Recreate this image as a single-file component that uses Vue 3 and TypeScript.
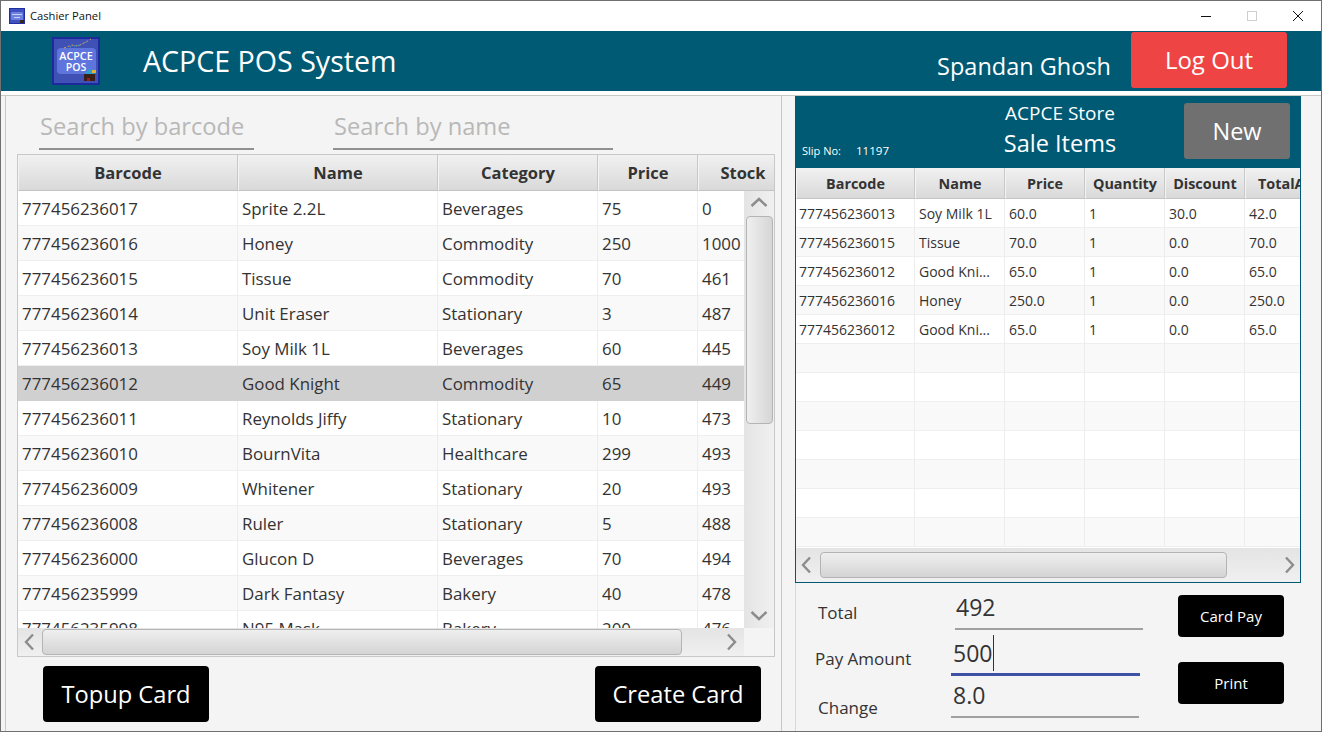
<script setup lang="ts">
const productHeads = ['Barcode', 'Name', 'Category', 'Price', 'Stock']
const products = [
  ['777456236017', 'Sprite 2.2L', 'Beverages', '75', '0'],
  ['777456236016', 'Honey', 'Commodity', '250', '1000'],
  ['777456236015', 'Tissue', 'Commodity', '70', '461'],
  ['777456236014', 'Unit Eraser', 'Stationary', '3', '487'],
  ['777456236013', 'Soy Milk 1L', 'Beverages', '60', '445'],
  ['777456236012', 'Good Knight', 'Commodity', '65', '449'],
  ['777456236011', 'Reynolds Jiffy', 'Stationary', '10', '473'],
  ['777456236010', 'BournVita', 'Healthcare', '299', '493'],
  ['777456236009', 'Whitener', 'Stationary', '20', '493'],
  ['777456236008', 'Ruler', 'Stationary', '5', '488'],
  ['777456236000', 'Glucon D', 'Beverages', '70', '494'],
  ['777456235999', 'Dark Fantasy', 'Bakery', '40', '478'],
  ['777456235998', 'N95 Mask', 'Bakery', '200', '476'],
]
const selectedRow = 5

const saleHeads = ['Barcode', 'Name', 'Price', 'Quantity', 'Discount', 'TotalAmount']
const saleRows = [
  ['777456236013', 'Soy Milk 1L', '60.0', '1', '30.0', '42.0'],
  ['777456236015', 'Tissue', '70.0', '1', '0.0', '70.0'],
  ['777456236012', 'Good Kni...', '65.0', '1', '0.0', '65.0'],
  ['777456236016', 'Honey', '250.0', '1', '0.0', '250.0'],
  ['777456236012', 'Good Kni...', '65.0', '1', '0.0', '65.0'],
  ['', '', '', '', '', ''],
  ['', '', '', '', '', ''],
  ['', '', '', '', '', ''],
  ['', '', '', '', '', ''],
  ['', '', '', '', '', ''],
  ['', '', '', '', '', ''],
  ['', '', '', '', '', ''],
]
</script>

<template>
  <div class="window">
    <div class="titlebar">
      <svg class="title-icon" viewBox="0 0 16 16">
        <rect width="16" height="16" fill="#1f2f9f" />
        <rect x="1" y="1" width="14" height="14" fill="#3f51c0" />
        <rect x="2" y="4" width="12" height="8" rx="1" fill="#6d82e0" />
        <rect x="3" y="6" width="10" height="1" fill="#c9d1f6" />
        <rect x="5" y="9" width="6" height="1" fill="#c9d1f6" />
        <rect x="11" y="12" width="4" height="3" fill="#3a2418" />
      </svg>
      <span class="title-text">Cashier Panel</span>
      <div class="win-controls">
        <svg class="win-btn" viewBox="0 0 46 30"><path d="M18 15.5h10" stroke="#111" fill="none" /></svg>
        <svg class="win-btn" viewBox="0 0 46 30"><rect x="18.5" y="10.5" width="9" height="9" stroke="#cfcfcf" fill="none" /></svg>
        <svg class="win-btn" viewBox="0 0 46 30"><path d="M18 10l10 10M28 10L18 20" stroke="#111" fill="none" /></svg>
      </div>
    </div>

    <header class="app-header">
      <svg class="logo" viewBox="0 0 48 48">
        <rect width="48" height="48" fill="#1c2b9c" />
        <rect x="2" y="2" width="44" height="44" fill="#3f51b5" />
        <rect x="5" y="11" width="39" height="26" rx="4" fill="#5f75de" />
        <path d="M12 11l8-3 6 1 8-4 5-3" stroke="#d9a05b" stroke-dasharray="2 2" fill="none" />
        <path d="M18 10l10-2 6-3" stroke="#3fc0c8" stroke-dasharray="1 3" fill="none" />
        <text x="24" y="22.5" class="logo-text" text-anchor="middle">ACPCE</text>
        <text x="24" y="34" class="logo-text small" text-anchor="middle">POS</text>
        <rect x="32" y="37" width="11" height="7" fill="#3a2018" />
        <rect x="35" y="41" width="3" height="3" fill="#a01c1c" />
        <path d="M33 37l3-5 5 1 3 2-1 2z" fill="#2f9fd0" />
        <rect x="40" y="33" width="4" height="3" fill="#e6b432" />
      </svg>
      <h1 class="app-title">ACPCE POS System</h1>
      <span class="user-name">Spandan Ghosh</span>
      <button class="logout">Log Out</button>
    </header>

    <div class="strip"></div>

    <main class="workspace">
      <section class="left-pane">
        <div class="search-row">
          <div class="search barcode">Search by barcode</div>
          <div class="search name">Search by name</div>
        </div>

        <div class="product-table">
          <div class="product-grid product-head">
            <div v-for="h in productHeads" :key="h" class="head-cell">{{ h }}</div>
          </div>
          <div class="product-middle">
            <div class="product-rows">
              <div
                v-for="(row, i) in products"
                :key="row[0]"
                class="product-grid product-row"
                :class="{ alt: i % 2 === 1, selected: i === selectedRow }"
              >
                <div v-for="(c, j) in row" :key="j" class="cell">{{ c }}</div>
              </div>
            </div>
            <div class="vbar">
              <div class="vbar-arrow up">
                <svg width="18" height="10" viewBox="0 0 18 10"><path d="M1.5 9L9 2l7.5 7" /></svg>
              </div>
              <div class="vbar-thumb"></div>
              <div class="bar-space"></div>
              <div class="vbar-arrow">
                <svg width="18" height="10" viewBox="0 0 18 10"><path d="M1.5 1L9 8l7.5-7" /></svg>
              </div>
            </div>
          </div>
          <div class="product-foot">
            <div class="hbar">
              <div class="hbar-arrow prev">
                <svg width="10" height="18" viewBox="0 0 10 18"><path d="M9 1.5L2 9l7 7.5" /></svg>
              </div>
              <div class="hbar-thumb product-thumb"></div>
              <div class="bar-space"></div>
              <div class="hbar-arrow">
                <svg width="10" height="18" viewBox="0 0 10 18"><path d="M1 1.5L8 9l-7 7.5" /></svg>
              </div>
            </div>
            <div class="corner"></div>
          </div>
        </div>

        <div class="card-actions">
          <button class="black-btn big">Topup Card</button>
          <button class="black-btn big">Create Card</button>
        </div>
      </section>

      <section class="right-pane">
        <div class="sale-box">
          <div class="sale-header">
            <div class="slip">
              <span class="slip-label">Slip No:</span>
              <span class="slip-no">11197</span>
            </div>
            <div class="sale-title">
              <div class="store">ACPCE Store</div>
              <div class="sale-items">Sale Items</div>
            </div>
            <button class="new-btn">New</button>
          </div>
          <div class="sale-grid sale-head">
            <div v-for="h in saleHeads" :key="h" class="head-cell">{{ h }}</div>
          </div>
          <div class="sale-rows">
            <div
              v-for="(row, i) in saleRows"
              :key="i"
              class="sale-grid sale-row"
              :class="{ alt: i % 2 === 1 }"
            >
              <div v-for="(c, j) in row" :key="j" class="cell">{{ c }}</div>
            </div>
          </div>
          <div class="hbar sale-hbar">
            <div class="hbar-arrow sale-prev">
              <svg width="10" height="18" viewBox="0 0 10 18"><path d="M9 1.5L2 9l7 7.5" /></svg>
            </div>
            <div class="hbar-thumb sale-thumb"></div>
            <div class="bar-space"></div>
            <div class="hbar-arrow sale-next">
              <svg width="10" height="18" viewBox="0 0 10 18"><path d="M1 1.5L8 9l-7 7.5" /></svg>
            </div>
          </div>
        </div>

        <div class="pay-area">
          <div class="pay-form">
            <div class="pay-row total">
              <span class="pay-label">Total</span>
              <div class="pay-field">492</div>
            </div>
            <div class="pay-row amount">
              <span class="pay-label">Pay Amount</span>
              <div class="pay-field focused">500<i class="caret"></i></div>
            </div>
            <div class="pay-row change">
              <span class="pay-label">Change</span>
              <div class="pay-field">8.0</div>
            </div>
          </div>
          <div class="pay-actions">
            <button class="black-btn small">Card Pay</button>
            <button class="black-btn small">Print</button>
          </div>
        </div>
      </section>
    </main>
  </div>
</template>

<style>
html,
body {
  margin: 0;
  background: #f4f4f4;
  overflow: hidden;
}
</style>

<style scoped>
.window {
  width: 1322px;
  height: 732px;
  box-sizing: border-box;
  border: 1px solid #6f6f6f;
  display: flex;
  flex-direction: column;
  font-family: "Open Sans", "Noto Sans", sans-serif;
  color: #333;
  background: #f4f4f4;
  overflow: hidden;
}

/* title bar */
.titlebar {
  height: 30px;
  flex: none;
  background: #fff;
  display: flex;
  align-items: center;
  padding-left: 8px;
  color: #111;
}
.title-icon {
  width: 16px;
  height: 16px;
  margin-right: 5px;
}
.title-text {
  font-size: 11.2px;
  padding-bottom: 2px;
}
.win-controls {
  margin-left: auto;
  display: flex;
}
.win-btn {
  width: 46px;
  height: 30px;
}

/* header */
.app-header {
  height: 60px;
  flex: none;
  background: #005a73;
  display: flex;
  align-items: center;
  color: #fff;
  padding-left: 51px;
}
.logo {
  width: 48px;
  height: 48px;
  flex: none;
}
.logo-text {
  font-size: 10.8px;
  font-weight: 600;
  fill: #fff;
  font-family: "Open Sans", sans-serif;
}
.logo-text.small {
  font-size: 10.5px;
}
.app-title {
  margin: 0 0 2px 43px;
  font-size: 28.6px;
  font-weight: 400;
}
.user-name {
  margin-left: auto;
  font-size: 23.5px;
  padding-top: 10px;
}
.logout {
  width: 156px;
  height: 56px;
  margin: 0 34px 3px 20px;
  border: 0;
  border-radius: 3px;
  background: #ef4444;
  color: #fff;
  font: inherit;
  font-size: 24px;
  padding: 0;
}
.strip {
  height: 4px;
  flex: none;
  background: #fff;
  border-bottom: 1px solid #c8c8c8;
}

/* panes */
.workspace {
  flex: 1;
  display: flex;
  min-height: 0;
  padding-left: 4px;
}
.left-pane {
  width: 777px;
  flex: none;
  box-sizing: border-box;
  border-left: 1px solid #c8c8c8;
  border-right: 1px solid #c8c8c8;
  padding-left: 11px;
}
.search-row {
  height: 58px;
  box-sizing: border-box;
  display: flex;
  align-items: flex-end;
  padding: 0 0 4px 22px;
}
.search {
  box-sizing: border-box;
  border-bottom: 2px solid #909090;
  font-size: 23.7px;
  line-height: 32px;
  color: #b8b8b8;
  padding: 0 0 6px 1px;
}
.search.barcode {
  width: 215px;
  margin-right: 79px;
}
.search.name {
  width: 280px;
}

/* left table */
.product-table {
  width: 758px;
  height: 503px;
  box-sizing: border-box;
  border: 1px solid #c8c8c8;
  display: flex;
  flex-direction: column;
  background: #fff;
  overflow: hidden;
}
.product-grid {
  display: grid;
  grid-template-columns: 220px 200px 160px 100px 90px;
}
.product-head {
  height: 36px;
  flex: none;
  width: 770px;
}
.head-cell {
  box-sizing: border-box;
  display: flex;
  align-items: center;
  justify-content: center;
  background: linear-gradient(#f1f1f1, #d9d9d9);
  border-right: 1px solid #c8c8c8;
  border-bottom: 1px solid #c4c4c4;
  border-left: 1px solid #f4f4f4;
  font-weight: 700;
  white-space: nowrap;
  color: #333;
  overflow: hidden;
}
.product-head .head-cell {
  font-size: 16.5px;
}
.product-middle {
  height: 437px;
  flex: none;
  display: flex;
}
.product-rows {
  width: 726px;
  flex: none;
  overflow: hidden;
}
.product-row {
  height: 35px;
  width: 770px;
  font-size: 16.9px;
}
.cell {
  box-sizing: border-box;
  border-right: 1px solid #ededed;
  border-bottom: 1px solid #efefef;
  padding-left: 4px;
  white-space: nowrap;
  overflow: hidden;
  display: flex;
  align-items: center;
  color: #333;
}
.alt {
  background: #f9f9f9;
}
.selected {
  background: #d0d0d0;
}
.selected .cell {
  border-color: #d0d0d0;
}

/* scrollbars */
.vbar {
  flex: 1;
  display: flex;
  flex-direction: column;
  align-items: center;
  background: linear-gradient(to right, #e4e4e4, #f0f0f0);
}
.vbar-arrow {
  height: 25px;
  flex: none;
  display: flex;
  align-items: center;
  justify-content: center;
}
.vbar-arrow.up {
  box-sizing: border-box;
  padding-bottom: 3px;
}
.vbar-thumb {
  width: 27px;
  height: 208px;
  flex: none;
  box-sizing: border-box;
  border: 1px solid #b4b4b4;
  border-radius: 4px;
  background: linear-gradient(to right, #efefef, #d6d6d6);
}
.bar-space {
  flex: 1;
}
.hbar {
  display: flex;
  align-items: center;
  background: linear-gradient(#e4e4e4, #f0f0f0);
}
.hbar-arrow {
  width: 24px;
  flex: none;
  display: flex;
  justify-content: center;
}
.hbar-arrow.prev {
  box-sizing: border-box;
  padding-right: 2px;
}
.hbar-arrow.sale-prev {
  box-sizing: border-box;
  padding-right: 4px;
}
.hbar-arrow.sale-next {
  margin-right: -2px;
}
.hbar-thumb {
  box-sizing: border-box;
  border: 1px solid #b4b4b4;
  border-radius: 4px;
  background: linear-gradient(#efefef, #d4d4d4);
  flex: none;
}
.vbar-arrow path,
.hbar-arrow path {
  fill: none;
  stroke: #8c8c8c;
  stroke-width: 2.4;
}
.product-foot {
  flex: 1;
  display: flex;
}
.product-foot .hbar {
  width: 726px;
  flex: none;
}
.corner {
  flex: 1;
  background: #f4f4f4;
}
.product-thumb {
  width: 640px;
  height: 26px;
}
.card-actions {
  width: 718px;
  display: flex;
  justify-content: space-between;
  margin: 9px 0 0 26px;
}
.black-btn {
  border: 0;
  background: #000;
  color: #fff;
  font-family: inherit;
  padding: 0;
  border-radius: 4px;
}
.black-btn.big {
  width: 166px;
  height: 56px;
  font-size: 23.7px;
}
.black-btn.small {
  width: 106px;
  height: 42px;
  font-size: 15px;
}

/* right pane */
.right-pane {
  width: 506px;
  margin-left: 13px;
  flex: none;
  display: flex;
  flex-direction: column;
}
.sale-box {
  height: 487px;
  flex: none;
  box-sizing: border-box;
  border: 1px solid #005a73;
  border-top: 0;
  display: flex;
  flex-direction: column;
  background: #fff;
  overflow: hidden;
}
.sale-header {
  height: 72px;
  flex: none;
  background: #005a73;
  color: #fff;
  display: flex;
  padding-left: 6px;
}
.slip {
  width: 170px;
  flex: none;
  font-size: 11px;
  padding-top: 47px;
  box-sizing: border-box;
  white-space: nowrap;
}
.slip-no {
  margin-left: 15px;
  font-size: 11.6px;
}
.sale-title {
  width: 176px;
  flex: none;
  text-align: center;
  padding-top: 5px;
}
.store {
  font-size: 19px;
  line-height: 25px;
}
.sale-items {
  font-size: 23.5px;
  line-height: 35px;
}
.new-btn {
  width: 106px;
  height: 56px;
  margin: 7px 10px 0 auto;
  border: 0;
  padding: 0;
  border-radius: 3px;
  background: #707070;
  color: #fff;
  font-family: inherit;
  font-size: 23.5px;
}
.sale-grid {
  display: grid;
  grid-template-columns: 119px 90px 80px 80px 80px 80px;
  width: 529px;
}
.sale-head {
  height: 31px;
  flex: none;
}
.sale-head .head-cell {
  font-size: 14.4px;
  padding-top: 1px;
}
.sale-head .head-cell:last-child {
  justify-content: flex-start;
  padding-left: 12px;
}
.sale-rows {
  height: 349px;
  flex: none;
  overflow: hidden;
}
.sale-row {
  height: 29px;
  font-size: 14px;
}
.sale-row .cell:first-child {
  padding-left: 3px;
}
.sale-hbar {
  flex: 1;
}
.sale-thumb {
  width: 407px;
  height: 26px;
}

/* payment */
.pay-area {
  flex: 1;
  display: flex;
  border-left: 1px solid #d8d8d8;
}
.pay-form {
  width: 348px;
  flex: none;
}
.pay-row {
  display: flex;
  align-items: flex-end;
  font-size: 17px;
}
.pay-row.total {
  height: 47px;
}
.pay-row.amount {
  height: 46px;
}
.pay-row.change {
  height: 42px;
}
.pay-label {
  height: 22px;
  line-height: 22px;
  flex: none;
  margin-bottom: 6px;
  white-space: nowrap;
}
.total .pay-label {
  width: 137px;
  margin-left: 22px;
}
.amount .pay-label {
  width: 136px;
  margin-left: 19px;
}
.change .pay-label {
  width: 133px;
  margin-left: 22px;
  margin-bottom: -1px;
}
.pay-field {
  box-sizing: border-box;
  width: 188px;
  height: 37px;
  border-bottom: 2px solid #a0a0a0;
  font-size: 23px;
  line-height: 28px;
  padding-left: 2px;
  color: #333;
  display: flex;
  align-items: center;
  padding-bottom: 7px;
}
.pay-field.focused {
  border-bottom: 3px solid #3f51a5;
  width: 189px;
}
.total .pay-field {
  padding-left: 1px;
}
.caret {
  width: 1px;
  height: 36px;
  background: #333;
  margin-left: 1px;
  flex: none;
}
.pay-actions {
  margin-left: 34px;
  padding-top: 12px;
  display: flex;
  flex-direction: column;
  gap: 25px;
}
</style>
